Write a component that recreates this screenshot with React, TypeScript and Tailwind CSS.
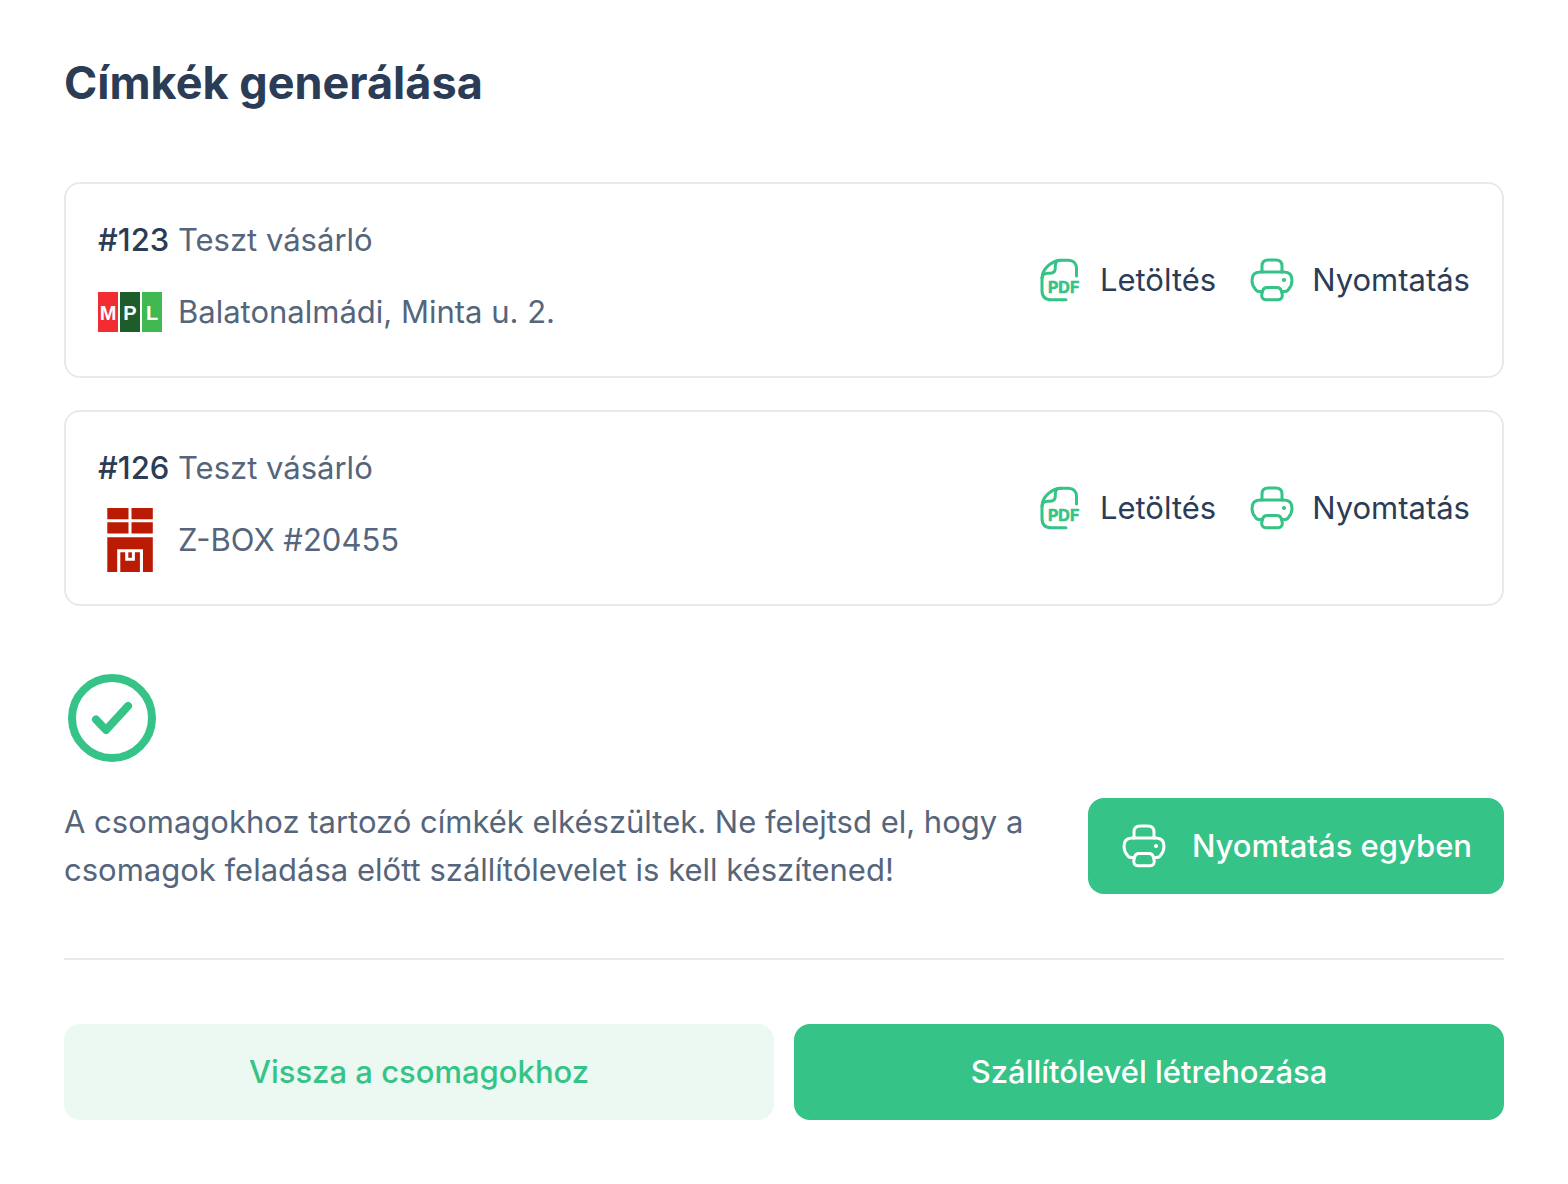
import type { ReactNode } from "react";

const PrinterIcon = () => (
  <svg
    className="size-12 shrink-0"
    viewBox="0 0 48 48"
    fill="none"
    stroke="currentColor"
    strokeWidth="3"
    strokeLinecap="round"
    strokeLinejoin="round"
    aria-hidden="true"
  >
    <path d="M14 16V10c0-4 2-6 6-6h8c4 0 6 2 6 6v6" />
    <path d="M14 35.500h-2c-2 0-3.500-.6-4.600-2.200C5.500 31 4 28 4 24.500 4 19 6.500 16 12 16h24c5.500 0 8 3 8 8.500 0 3.500-1.500 6.500-3.400 8.800C39.500 34.900 38 35.500 36 35.500h-2" />
    <path d="M19 31.500h10c2.200 0 3.600 1 4.200 3l.9 3.400c.8 3.400-.9 5.900-4.300 5.900H18.200c-3.400 0-5.100-2.500-4.300-5.900l.9-3.400c.6-2 2-3 4.200-3z" />
    <circle cx="36" cy="24" r="1.100" fill="currentColor" strokeWidth="2" />
  </svg>
);

const PdfIcon = () => (
  <svg
    className="size-12 shrink-0"
    viewBox="0 0 48 48"
    fill="none"
    stroke="currentColor"
    strokeWidth="3"
    strokeLinecap="round"
    aria-hidden="true"
  >
    <path d="M40.500 20v-7.500c0-5-3-8.300-8-8.300h-8C16.500 4.200 6 13 6 22v12.500c0 6 3 9.300 9 9.300h15" />
    <path d="M6 22c.3-3 2.500-4.700 6-4.700h2c3.500 0 5.300-1.800 5.300-5.300V9.500c0-3 1.700-5.300 5.200-5.300" />
    <text
      x="12"
      y="37"
      fill="currentColor"
      strokeWidth="0.600"
      strokeLinejoin="round"
      className="font-['Inter',sans-serif] text-base font-bold"
    >
      PDF
    </text>
  </svg>
);

const MplLogo = () => (
  <svg className="h-10 w-16 shrink-0" viewBox="0 0 64 40" role="img" aria-label="MPL">
    <rect width="20" height="40" fill="#f12d32" />
    <rect x="22" width="20" height="40" fill="#1e5c29" />
    <rect x="44" width="20" height="40" fill="#40b950" />
    <g
      fill="#fff"
      textAnchor="middle"
      className="font-['Liberation_Sans',Arial,sans-serif] text-xl font-bold"
    >
      <text x="10" y="28">M</text>
      <text x="32" y="28">P</text>
      <text x="54" y="28">L</text>
    </g>
  </svg>
);

const ZBoxLogo = () => (
  <svg className="size-16 shrink-0" viewBox="0 0 64 64" fill="#ba1b02" aria-hidden="true">
    <path d="M9.300 0H30.500v11.300H9.300zM33.500 0h21.300v11.300H33.500zM9.300 14.300H30.500v11.300H9.300zM33.500 14.300h21.300v11.300H33.500z" />
    <path d="M9.300 29.300h45.500V64H45V41.300H19.200V64H9.300z" />
    <path d="M22.300 44.300h4.900v8.500h9.700v-8.500h5V64H22.300z" />
    <path d="M30.300 44.300h3.600v5.500h-3.600z" />
  </svg>
);

const SuccessIcon = () => (
  <svg
    className="size-24 text-[#35c387]"
    viewBox="0 0 96 96"
    fill="none"
    stroke="currentColor"
    strokeWidth="8"
    strokeLinecap="round"
    strokeLinejoin="round"
    aria-hidden="true"
  >
    <circle cx="48" cy="48" r="40" />
    <path d="M32 49.500 42 60l22-24" />
  </svg>
);

const ActionButton = ({ icon, label }: { icon: ReactNode; label: string }) => (
  <button type="button" className="flex items-center gap-4 text-[#35c387]">
    {icon}
    <span className="text-[#2b3c56]">{label}</span>
  </button>
);

const labels = [
  { id: "#123", name: "Teszt vásárló", address: "Balatonalmádi, Minta u. 2.", logo: <MplLogo /> },
  { id: "#126", name: "Teszt vásárló", address: "Z-BOX #20455", logo: <ZBoxLogo /> },
];

const App = () => {
  return (
    <main className="px-16 pt-12 pb-16 bg-white font-['Inter',sans-serif] text-[31px] leading-[48px] text-[#55657b]">
      <h1 className="text-[45px] leading-[70px] font-bold text-[#2b3c56]">
        Címkék generálása
      </h1>
      <ul className="flex flex-col gap-8 mt-16">
        {labels.map((item) => (
          <li
            key={item.id}
            className="flex items-center justify-between p-8 border-2 border-[#e8e9ec] rounded-2xl"
          >
            <div className="flex flex-col gap-4">
              <p>
                <span className="font-medium text-[#2b3c56]">{item.id}</span> {item.name}
              </p>
              <div className="flex items-center h-16 gap-4">
                {item.logo}
                <span>{item.address}</span>
              </div>
            </div>
            <div className="flex gap-8">
              <ActionButton icon={<PdfIcon />} label="Letöltés" />
              <ActionButton icon={<PrinterIcon />} label="Nyomtatás" />
            </div>
          </li>
        ))}
      </ul>
      <section className="mt-16">
        <SuccessIcon />
        <div className="flex items-center justify-between gap-10 mt-8">
          <p>
            A csomagokhoz tartozó címkék elkészültek. Ne felejtsd el, hogy a
            csomagok feladása előtt szállítólevelet is kell készítened!
          </p>
          <button
            type="button"
            className="flex items-center h-24 gap-6 px-8 font-medium text-white whitespace-nowrap bg-[#35c387] rounded-2xl"
          >
            <PrinterIcon />
            Nyomtatás egyben
          </button>
        </div>
      </section>
      <hr className="my-16 border-t-2 border-[#e8e9ec]" />
      <div className="grid grid-cols-2 gap-5">
        <button
          type="button"
          className="h-24 font-medium text-[#35c387] bg-[#ebf9f2] rounded-2xl"
        >
          Vissza a csomagokhoz
        </button>
        <button type="button" className="h-24 font-medium text-white bg-[#35c387] rounded-2xl">
          Szállítólevél létrehozása
        </button>
      </div>
    </main>
  );
};

export default App;
